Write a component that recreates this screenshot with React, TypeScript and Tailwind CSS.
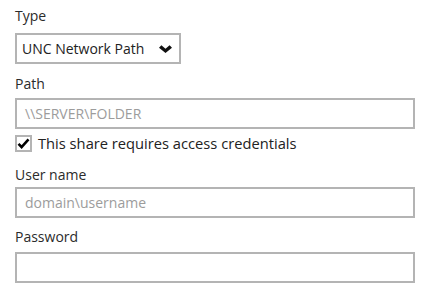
import React from "react";

export default function App() {
  return (
    <div className="w-[430px] h-[300px] bg-white pl-[15px] pt-[6px] text-[#2b2b2b] text-[14px]" style={{ fontFamily: '"Open Sans", "Liberation Sans", sans-serif' }}>
      <div className="leading-[20px] h-[20px]">Type</div>
      <div className="mt-[7px] w-[166px] h-[31px] border-2 border-[#b4b4b4] flex items-center pl-[5px] pr-[7px] justify-between">
        <span className="text-[#222]">UNC Network Path</span>
        <svg width="13" height="8" viewBox="0 0 13 8">
          <path d="M0 2.7 L2.4 0.2 L6.5 3.7 L10.6 0.2 L13 2.7 L6.5 8 Z" fill="#111" />
        </svg>
      </div>
      <div className="mt-[10px] leading-[20px] h-[20px]">Path</div>
      <div className="mt-[4px] w-[400px] h-[31px] border-2 border-[#b4b4b4] flex items-center pl-[8px] text-[#9c9c9c]">\\SERVER\FOLDER</div>
      <div className="mt-[4px] flex items-center h-[20px]">
        <div className="w-[17px] h-[17px] border-2 border-[#b4b4b4] flex items-center justify-center">
          <svg width="13" height="13" viewBox="0 0 13 13">
            <path d="M1.5 6.8 L4.6 10 L11.5 2.3" fill="none" stroke="#000" strokeWidth="2.6" />
          </svg>
        </div>
        <span className="ml-[6px] text-[#222] text-[14.7px] leading-[20px]">This share requires access credentials</span>
      </div>
      <div className="mt-[12px] leading-[20px] h-[20px]">User name</div>
      <div className="mt-[2px] w-[400px] h-[31px] border-2 border-[#b4b4b4] flex items-center pl-[8px] text-[#9c9c9c]">domain\username</div>
      <div className="mt-[9px] leading-[20px] h-[20px]">Password</div>
      <div className="mt-[5px] w-[400px] h-[31px] border-2 border-[#b4b4b4]"></div>
    </div>
  );
}
